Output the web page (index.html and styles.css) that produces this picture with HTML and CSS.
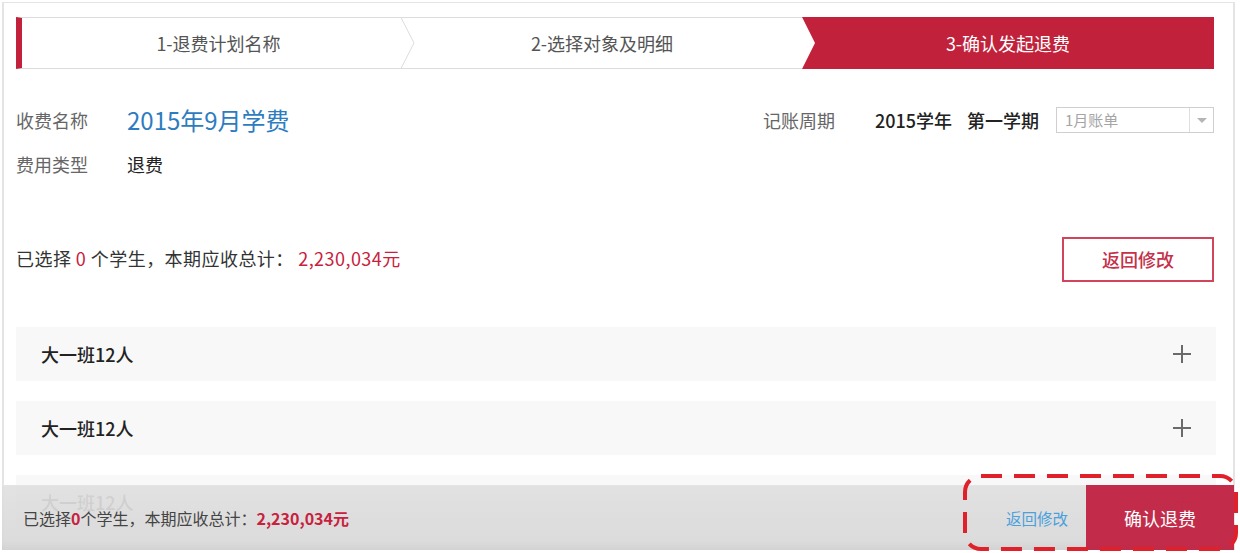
FILE: index.html
```html
<!DOCTYPE html>
<html lang="zh-CN">
<head>
<meta charset="utf-8">
<title>确认发起退费</title>
<link rel="stylesheet" href="styles.css">
</head>
<body>
<div class="page">
  <div class="steps">
    <div class="step step1">1-退费计划名称
      <svg class="chev" width="14" height="52" viewBox="0 0 14 52"><polygon points="0,0.5 13,26 0,51.5" fill="#fff"/><polyline points="0,0.5 13,26 0,51.5" fill="none" stroke="#dcdcdc" stroke-width="1"/></svg>
    </div>
    <div class="step step2">2-选择对象及明细</div>
    <div class="step step3">3-确认发起退费</div>
  </div>

  <div class="info">
    <div class="info-left">
      <div class="field"><span class="label">收费名称</span><span class="title">2015年9月学费</span></div>
      <div class="field field2"><span class="label">费用类型</span><span class="value">退费</span></div>
    </div>
    <div class="period">
      <span class="label p-label">记账周期</span>
      <span class="strong p-year">2015学年</span>
      <span class="strong p-term">第一学期</span>
      <div class="select"><span class="select-text">1月账单</span><span class="select-btn"><span class="caret"></span></span></div>
    </div>
  </div>

  <div class="summary">
    <p class="summary-text">已选择 <span class="red">0</span> 个学生，本期应收总计： <span class="red">2,230,034元</span></p>
    <button class="btn-outline">返回修改</button>
  </div>

  <div class="groups">
    <div class="group"><span class="group-name">大一班12人</span><svg class="plus" width="20" height="20" viewBox="0 0 20 20"><path d="M10 1v18M1 10h18" stroke="#6a6a6a" stroke-width="2"/></svg></div>
    <div class="group"><span class="group-name">大一班12人</span><svg class="plus" width="20" height="20" viewBox="0 0 20 20"><path d="M10 1v18M1 10h18" stroke="#6a6a6a" stroke-width="2"/></svg></div>
    <div class="group"><span class="group-name">大一班12人</span><svg class="plus" width="20" height="20" viewBox="0 0 20 20"><path d="M10 1v18M1 10h18" stroke="#6a6a6a" stroke-width="2"/></svg></div>
  </div>

  <div class="footer">
    <p class="footer-text">已选择<b class="red">0</b>个学生，本期应收总计：<b class="red">2,230,034元</b></p>
    <a class="footer-link">返回修改</a>
    <button class="btn-confirm">确认退费</button>
  </div>
</div>
<svg class="annot" width="276" height="78" viewBox="0 0 276 78"><rect x="2" y="2" width="271" height="73" rx="16" ry="16" fill="none" stroke="#e0202a" stroke-width="4" stroke-dasharray="21 12"/></svg>
</body>
</html>
```

FILE: styles.css
```css
* { box-sizing: border-box; }
html, body { margin: 0; padding: 0; background: #fff; }
body {
  font-family: "Noto Sans CJK SC", "Noto Sans", sans-serif;
  color: #333;
  width: 1240px;
  height: 553px;
  overflow: hidden;
  position: relative;
}
.page {
  position: relative;
  margin: 2px 0 0 2px;
  width: 1233px;
  height: 548px;
  border: 1px solid #e4e4e4;
  border-width: 1px 2px 0 2px;
  padding: 14px 17px 0 12px;
}

/* steps */
.steps {
  display: flex;
  height: 52px;
  width: 1198px;
}
.step {
  height: 52px;
  font-size: 18px;
  line-height: 50px;
  text-align: center;
  color: #555;
}
.step1, .step2 {
  border-top: 1px solid #dcdcdc;
  border-bottom: 1px solid #dcdcdc;
  background: #fff;
}
.step1 {
  position: relative;
  width: 386px;
  border-left: 6px solid #c1213b;
  padding-left: 13px;
}
.chev {
  position: absolute;
  top: -1px;
  right: -13px;
  z-index: 2;
}
.step2 {
  width: 400px;
  padding-left: 4px;
  padding-right: 4px;
}
.step3 {
  width: 412px;
  background: #c1213b;
  color: #fff;
  line-height: 52px;
  clip-path: polygon(0 0, 100% 0, 100% 100%, 0 100%, 13px 50%);
}

/* info */
.info {
  display: flex;
  justify-content: space-between;
  align-items: flex-start;
  margin-top: 35px;
  width: 1198px;
}
.field {
  display: flex;
  align-items: center;
  height: 32px;
}
.field2 { margin-top: 12px; }
.label {
  font-size: 18px;
  color: #666;
  line-height: 32px;
}
.field .label { width: 111px; }
.title {
  font-size: 24px;
  color: #2e7cc0;
  line-height: 32px;
}
.value {
  font-size: 18px;
  color: #222;
  line-height: 32px;
}
.period {
  display: flex;
  align-items: center;
  height: 32px;
}
.p-label { margin-right: 40px; }
.strong {
  font-size: 18px;
  color: #222;
  font-weight: 500;
  line-height: 32px;
}
.p-year { margin-right: 15px; }
.p-term { margin-right: 17px; }
.select {
  display: flex;
  width: 158px;
  height: 26px;
  border: 1px solid #cfcfcf;
  background: #fff;
}
.select-text {
  flex: 1;
  font-size: 15px;
  line-height: 24px;
  color: #a5a5a5;
  padding-left: 8px;
}
.select-btn {
  width: 24px;
  border-left: 1px solid #dedede;
  display: flex;
  align-items: center;
  justify-content: center;
}
.caret {
  width: 0;
  height: 0;
  border-left: 5px solid transparent;
  border-right: 5px solid transparent;
  border-top: 5px solid #b5b5b5;
}

/* summary */
.summary {
  display: flex;
  justify-content: space-between;
  align-items: center;
  margin-top: 57px;
  width: 1198px;
}
.summary-text {
  margin: 0;
  font-size: 18px;
  color: #333;
  line-height: 26px;
  letter-spacing: 0.45px;
  position: relative;
  top: -2px;
}
.red { color: #c8213e; }
.btn-outline {
  width: 152px;
  height: 45px;
  border: 2px solid #d0455c;
  background: #fff;
  color: #c5304a;
  font-family: inherit;
  font-size: 18px;
  font-weight: 500;
  line-height: 41px;
  padding: 0;
}

/* groups */
.groups {
  margin-top: 45px;
  display: flex;
  flex-direction: column;
  gap: 20px;
  width: 1200px;
}
.group {
  display: flex;
  justify-content: space-between;
  align-items: center;
  height: 54px;
  background: #f8f8f8;
  padding: 0 24px 0 25px;
}
.group-name {
  font-size: 18px;
  font-weight: 500;
  color: #222;
}

/* footer */
.footer {
  position: absolute;
  left: -2px;
  right: -1px;
  bottom: 0;
  height: 65px;
  display: flex;
  align-items: center;
  background: linear-gradient(to bottom, rgba(224,224,224,0.92) 0%, rgba(217,217,217,0.92) 85%, rgba(208,208,208,0.94) 100%);
  border-top: 1px solid rgba(230,230,230,0.9);
  padding-left: 21px;
}
.footer-text {
  margin: 0;
  flex: 1;
  font-size: 16px;
  color: #444;
  line-height: 24px;
}
.footer-text b { font-weight: 700; }
.footer-link {
  font-size: 15.5px;
  color: #4aa1dc;
  margin-right: 18px;
  line-height: 24px;
}
.btn-confirm {
  width: 148px;
  height: 65px;
  margin-top: -1px;
  border: none;
  background: rgba(192,30,62,0.93);
  color: #fff;
  font-family: inherit;
  font-size: 18px;
  padding: 0;
}

/* annotation */
.annot {
  position: absolute;
  left: 963px;
  top: 474px;
}
```
